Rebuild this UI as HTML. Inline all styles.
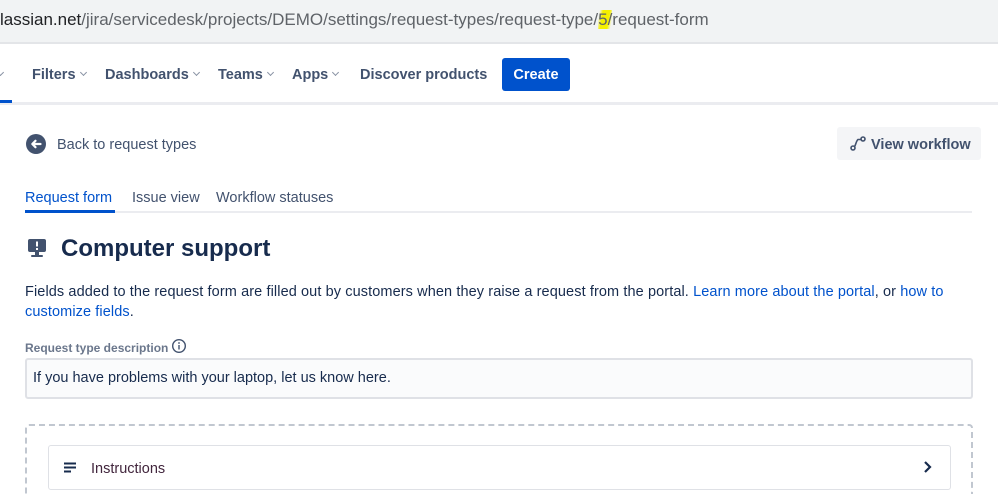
<!DOCTYPE html>
<html><head><meta charset="utf-8"><style>
*{margin:0;padding:0;box-sizing:border-box}
html,body{width:998px;height:494px;overflow:hidden}
body{background:#fff;font-family:"Liberation Sans",sans-serif;color:#172b4d;position:relative}
.a{position:absolute;white-space:nowrap}
.nav{font-size:14.5px;font-weight:bold;color:#42526e;top:67px}
.chev{display:inline-block;width:5px;height:5px;border-right:1.5px solid #8993a4;border-bottom:1.5px solid #8993a4;transform:rotate(45deg);margin-left:5px;vertical-align:4px}
a{color:#0052cc;text-decoration:none}
</style></head><body>
<div class="a" style="left:0;top:0;width:998px;height:42px;background:#f1f3f4"></div>
<div class="a" style="left:0;top:42px;width:998px;height:2px;background:#e3e5e8"></div>
<div class="a" style="left:0;top:10px;font-size:17px;color:#5f6368"><span style="color:#202124">lassian.net</span>/jira/servicedesk/projects/DEMO/settings/request-types/request-type/<span style="background:linear-gradient(100deg,transparent 10%,#f5f000 30%,#f5f000 70%,transparent 90%)">5/</span>request-form</div>
<div class="a" style="left:0;top:102px;width:998px;height:3px;background:#ebecf0"></div>
<div class="a" style="left:0;top:100px;width:12px;height:3px;background:#0052cc"></div>
<div class="a nav" style="left:-2px"><span class="chev" style="margin-left:0"></span></div>
<div class="a nav" style="left:32px">Filters<span class="chev"></span></div>
<div class="a nav" style="left:105px">Dashboards<span class="chev"></span></div>
<div class="a nav" style="left:218px">Teams<span class="chev"></span></div>
<div class="a nav" style="left:292px">Apps<span class="chev"></span></div>
<div class="a nav" style="left:360px">Discover products</div>
<div class="a" style="left:502px;top:58px;width:68px;height:33px;background:#0052cc;border-radius:3px;color:#fff;font-weight:bold;font-size:14.5px;text-align:center;line-height:34px">Create</div>

<div class="a" style="left:26px;top:134px;width:20px;height:20px;border-radius:50%;background:#42526e"></div>
<svg class="a" style="left:26px;top:134px" width="20" height="20"><path d="M14.5 10H6.5M9.5 6.8L6.3 10l3.2 3.2" stroke="#fff" stroke-width="2.2" fill="none" stroke-linecap="round" stroke-linejoin="round"/></svg>
<div class="a" style="left:57px;top:137px;font-size:14.5px;color:#42526e">Back to request types</div>
<div class="a" style="left:837px;top:127px;width:144px;height:33px;background:#f4f5f7;border-radius:3px"></div>
<svg class="a" style="left:849px;top:135px" width="18" height="18"><circle cx="4" cy="13" r="2" fill="none" stroke="#42526e" stroke-width="1.6"/><circle cx="14" cy="4" r="2" fill="none" stroke="#42526e" stroke-width="1.6"/><path d="M5.5 11.5C7 10 7 6 9 4.5h3" fill="none" stroke="#42526e" stroke-width="1.6"/></svg>
<div class="a" style="left:871px;top:137px;font-size:14.5px;font-weight:bold;color:#42526e">View workflow</div>

<div class="a" style="left:25px;top:190px;font-size:14.5px;color:#0052cc">Request form</div>
<div class="a" style="left:132px;top:190px;font-size:14.5px;color:#42526e">Issue view</div>
<div class="a" style="left:216px;top:190px;font-size:14.5px;color:#42526e">Workflow statuses</div>
<div class="a" style="left:25px;top:211px;width:947px;height:2px;background:#ebecf0"></div>
<div class="a" style="left:25px;top:210px;width:90px;height:3px;background:#0052cc"></div>

<svg class="a" style="left:27px;top:238px" width="20" height="20"><rect x="1" y="1" width="18" height="13" rx="2" fill="#42526e"/><rect x="8" y="14" width="4" height="3" fill="#42526e"/><rect x="4" y="17" width="12" height="2" rx="1" fill="#42526e"/><rect x="9" y="3.5" width="2" height="5" fill="#fff"/><rect x="9" y="10" width="2" height="2" fill="#fff"/></svg>
<div class="a" style="left:61px;top:235px;font-size:24px;font-weight:bold;color:#172b4d">Computer support</div>

<div class="a" style="left:25px;top:284px;font-size:14.5px;letter-spacing:0.1px">Fields added to the request form are filled out by customers when they raise a request from the portal. <a>Learn more about the portal</a>, or <a>how to</a></div>
<div class="a" style="left:25px;top:304px;font-size:14.5px;letter-spacing:0.1px"><a>customize fields</a>.</div>
<div class="a" style="left:25px;top:341px;font-size:12px;font-weight:bold;color:#6b778c">Request type description</div>
<svg class="a" style="left:171px;top:338px" width="16" height="16"><circle cx="8" cy="8" r="6.3" fill="none" stroke="#42526e" stroke-width="1.4"/><rect x="7.3" y="7" width="1.4" height="4.5" fill="#42526e"/><circle cx="8" cy="5" r="0.9" fill="#42526e"/></svg>
<div class="a" style="left:25px;top:358px;width:948px;height:41px;background:#fafbfc;border:2px solid #dfe1e6;border-radius:3px"></div>
<div class="a" style="left:33px;top:370px;font-size:14.5px">If you have problems with your laptop, let us know here.</div>

<div class="a" style="left:25px;top:424px;width:948px;height:70px;border:2px dashed #c1c7d0;border-bottom:none;border-radius:4px 4px 0 0"></div>
<div class="a" style="left:48px;top:445px;width:903px;height:45px;border:1.5px solid #dfe1e6;border-radius:3px;background:#fff"></div>
<svg class="a" style="left:63px;top:461px" width="16" height="16"><path d="M1 2.5h12M1 6.5h12M1 10.5h7" stroke="#172b4d" stroke-width="2"/></svg>
<div class="a" style="left:91px;top:461px;font-size:14.5px;color:#42263d">Instructions</div>
<svg class="a" style="left:921px;top:460px" width="14" height="14"><path d="M4 2l5 5-5 5" stroke="#172b4d" stroke-width="2.2" fill="none"/></svg>
</body></html>
